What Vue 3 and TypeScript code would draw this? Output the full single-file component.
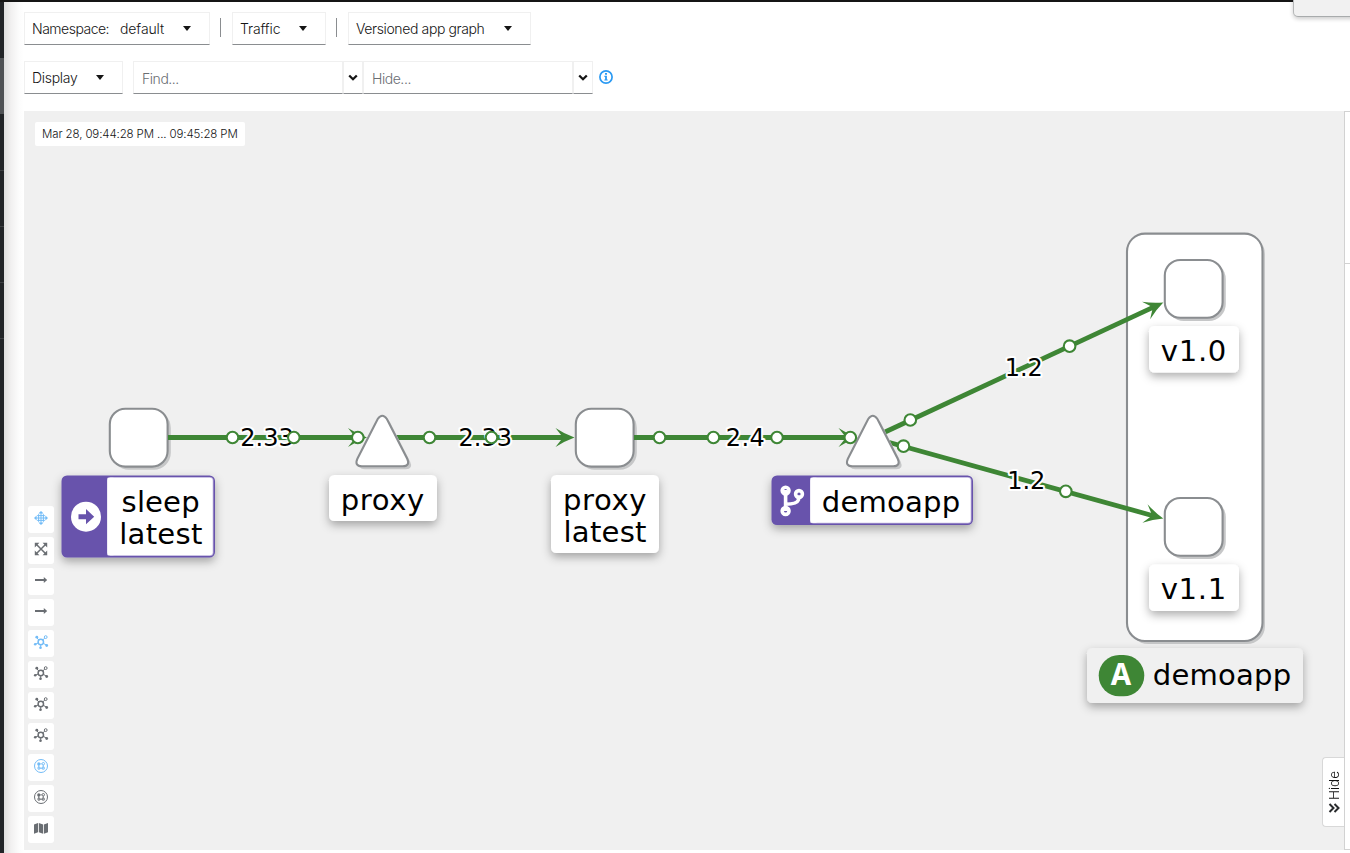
<script setup lang="ts">
interface Point { x: number; y: number }
interface Edge { from: Point; to: Point; arrow: Point; angle: number }
interface Line { text: string; x: number; y: number; w: number }
interface Label { x: number; y: number; w: number; h: number; lines: Line[]; badge?: number }

const GREEN = '#3e8635'

const edges: Edge[] = [
  { from: { x: 168, y: 437.5 }, to: { x: 355, y: 437.5 }, arrow: { x: 367, y: 437.5 }, angle: 0 },
  { from: { x: 396, y: 437.5 }, to: { x: 565, y: 437.5 }, arrow: { x: 574.5, y: 437.5 }, angle: 0 },
  { from: { x: 634, y: 437.5 }, to: { x: 846, y: 437.5 }, arrow: { x: 857.5, y: 437.5 }, angle: 0 },
  { from: { x: 884, y: 432.5 }, to: { x: 1153.5, y: 307.1 }, arrow: { x: 1163.3, y: 302.5 }, angle: -25 },
  { from: { x: 884, y: 441 }, to: { x: 1153, y: 515.7 }, arrow: { x: 1163.3, y: 518.5 }, angle: 15.5 },
]
const rates: Line[] = [
  { text: '2.33', x: 267, y: 446, w: 53.5 },
  { text: '2.33', x: 485.2, y: 446, w: 53.5 },
  { text: '2.4', x: 745.3, y: 446, w: 39 },
  { text: '1.2', x: 1023.7, y: 376, w: 38 },
  { text: '1.2', x: 1026.3, y: 489, w: 38 },
]
const dots: Point[] = [
  { x: 232.5, y: 437.5 }, { x: 293.8, y: 437.5 }, { x: 357.8, y: 437.5 },
  { x: 429.5, y: 437.5 }, { x: 491.5, y: 437.5 }, { x: 659.5, y: 437.5 },
  { x: 713.4, y: 437.5 }, { x: 777, y: 437.5 }, { x: 850.3, y: 437.5 },
  { x: 910.3, y: 420 }, { x: 903.5, y: 446.2 }, { x: 1069.6, y: 346.2 }, { x: 1065.8, y: 491.3 },
]
const squares: Point[] = [
  { x: 109.8, y: 408.8 }, { x: 575.8, y: 408.8 }, { x: 1164.8, y: 260 }, { x: 1164.8, y: 498 },
]
const triangles: Point[] = [{ x: 382.3, y: 415.8 }, { x: 872.8, y: 415.8 }]
const trianglePath = 'M-4.6 3.2Q0-3.2 4.6 3.2L24.8 42.6Q28.2 50.3 20.5 50.5H-20.5Q-28.2 50.3-24.8 42.6Z'

const labels: Label[] = [
  { x: 61.5, y: 475.5, w: 153.5, h: 82, badge: 46, lines: [
    { text: 'sleep', x: 160.6, y: 511.6, w: 78 }, { text: 'latest', x: 160.8, y: 543.6, w: 83 }] },
  { x: 329, y: 475, w: 108, h: 46, lines: [{ text: 'proxy', x: 382.5, y: 509.7, w: 83.5 }] },
  { x: 551, y: 475, w: 108, h: 78, lines: [
    { text: 'proxy', x: 604.7, y: 509.7, w: 83.5 }, { text: 'latest', x: 605, y: 541.7, w: 83 }] },
  { x: 771.5, y: 475.5, w: 201.5, h: 49.5, badge: 39, lines: [{ text: 'demoapp', x: 891, y: 511.6, w: 138.5 }] },
  { x: 1149, y: 326, w: 90, h: 46.5, lines: [{ text: 'v1.0', x: 1193.6, y: 361, w: 65.5 }] },
  { x: 1149, y: 564.5, w: 90, h: 46.5, lines: [{ text: 'v1.1', x: 1193.4, y: 599, w: 65.5 }] },
]

const tools: { icon: string; active?: boolean }[] = [
  { icon: 'drag', active: true }, { icon: 'fit' }, { icon: 'arrow' }, { icon: 'arrow' },
  { icon: 'topology', active: true }, { icon: 'topology' }, { icon: 'topology' }, { icon: 'topology' },
  { icon: 'boxes', active: true }, { icon: 'boxes' }, { icon: 'map' },
]
</script>

<template>
  <div class="page">
    <nav class="rail"><i class="current"></i><i v-for="n in 4" :key="n" class="entry"></i></nav>
    <main>
      <header class="filters">
        <div class="row">
          <button class="select ns"><span class="key">Namespace:</span><span class="value">default</span><i class="caret"></i></button>
          <i class="divider"></i>
          <button class="select traffic"><span>Traffic</span><i class="caret"></i></button>
          <i class="divider second"></i>
          <button class="select kind"><span>Versioned app graph</span><i class="caret"></i></button>
        </div>
        <div class="row">
          <button class="select display"><span>Display</span><i class="caret"></i></button>
          <div class="field">Find...</div>
          <button class="drop"><svg viewBox="0 0 10 7"><path d="M1.2 1.5 5 5.2 8.8 1.5" /></svg></button>
          <div class="field">Hide...</div>
          <button class="drop"><svg viewBox="0 0 10 7"><path d="M1.2 1.5 5 5.2 8.8 1.5" /></svg></button>
          <svg class="info" viewBox="0 0 14 14"><circle cx="7" cy="7" r="6.1" /><path d="M6 3h2v1.8H6zM5.4 5.8h2.5v3.6h.8v1.2H5.3V9.4h.8V7h-.7z" /></svg>
        </div>
      </header>

      <div class="board">
        <section class="canvas">
          <time class="range">Mar 28, 09:44:28 PM ... 09:45:28 PM</time>
          <div class="tools">
            <button v-for="(tool, i) in tools" :key="i" :class="{ active: tool.active }">
              <svg viewBox="0 0 14 14">
                <template v-if="tool.icon === 'drag'">
                  <path d="M7 0 9.6 2.6H4.4ZM7 14 4.4 11.4h5.2ZM0 7l2.6-2.6v5.2ZM14 7l-2.6 2.6V4.4Z" />
                  <path d="M7 2v10M2 7h10M4.6 3.2v7.6M9.4 3.2v7.6M3.2 4.6h7.6M3.2 9.4h7.6" class="line thin" />
                </template>
                <template v-else-if="tool.icon === 'fit'">
                  <path d="M.8.8h4.6L.8 5.4ZM13.2.8v4.6L8.6.8ZM.8 13.2V8.6l4.6 4.6ZM13.2 13.2H8.6l4.6-4.6Z" />
                  <path d="M2.5 2.5l9 9M11.5 2.5l-9 9" class="line" />
                </template>
                <template v-else-if="tool.icon === 'arrow'">
                  <path d="M1 6.1h8.8V4L13.2 7 9.8 10V7.9H1Z" />
                </template>
                <template v-else-if="tool.icon === 'topology'">
                  <circle cx="6.8" cy="7" r="2.7" class="line" />
                  <path d="M4.8 5 2.8 2.7M8.7 5l2.2-2M4.2 8 1.2 9.2M9.3 8.3l3.2 1.9M6.7 9.8v3" class="line thin" />
                  <circle cx="2.8" cy="2.2" r="1.4" /><circle cx="1.2" cy="9.3" r="1.3" /><circle cx="6.5" cy="12.7" r="1.3" /><circle cx="12.7" cy="10.5" r="1.4" />
                  <circle cx="11.7" cy="2.1" r="1.4" class="line thin" />
                </template>
                <template v-else-if="tool.icon === 'boxes'">
                  <circle cx="7" cy="7" r="6.5" class="line thin" />
                  <circle cx="4.8" cy="4.9" r="1.6" /><circle cx="9.3" cy="4.7" r="1.2" class="line thin" />
                  <path d="M4 8.2h1.8v1.9H4zM8.3 8.2h1.9v1.9H8.3zM4.8 6v2M9.2 6v2M6 9.2h2M6.2 4.9h1.6" class="line thin" />
                </template>
                <path v-else d="M0 3.5 4 2v9.2L0 12.8ZM4.8 2l4.3 1.5v9.3L4.8 11.2ZM9.9 3.5 14 2v9.2l-4.1 1.6Z" />
              </svg>
            </button>
          </div>
          <button class="hide-tab"><span>Hide</span><svg viewBox="0 0 12 10"><path d="M1.5 1 5.5 5l-4 4M6.5 1l4 4-4 4" /></svg></button>
        </section>
        <aside class="side"><div></div></aside>
      </div>
    </main>

    <svg class="graph" width="1350" height="853" viewBox="0 0 1350 853">
      <defs>
        <filter id="lift" x="-20%" y="-30%" width="140%" height="180%">
          <feDropShadow dx="0" dy="4" stdDeviation="5" flood-color="#000" flood-opacity=".32" />
        </filter>
      </defs>
      <rect x="1130" y="236" width="135" height="408" rx="18" class="shade" />
      <rect x="1127" y="233.6" width="135.5" height="407.4" rx="18" class="outline" />

      <g v-for="(s, i) in squares" :key="'s' + i">
        <rect :x="s.x + 2" :y="s.y + 2" width="59" height="59" rx="17" class="shade" />
        <rect :x="s.x" :y="s.y" width="57.8" height="57.8" rx="15.5" class="outline" />
      </g>

      <g v-for="(e, i) in edges" :key="'e' + i">
        <line :x1="e.from.x" :y1="e.from.y" :x2="e.to.x" :y2="e.to.y" :stroke="GREEN" stroke-width="4.8" />
        <path d="M0 0Q-10-3.6-19-9.6L-11.5 0-19 9.6Q-10 3.6 0 0Z" :fill="GREEN" :transform="`translate(${e.arrow.x} ${e.arrow.y}) rotate(${e.angle})`" />
      </g>
      <text v-for="(r, i) in rates" :key="'r' + i" :x="r.x" :y="r.y" :textLength="r.w" class="rate">{{ r.text }}</text>
      <g v-for="(t, i) in triangles" :key="'t' + i">
        <path :d="trianglePath" class="shade" :transform="`translate(${t.x + 3} ${t.y + 3})`" />
        <path :d="trianglePath" class="outline" :transform="`translate(${t.x} ${t.y})`" />
      </g>
      <circle v-for="(d, i) in dots" :key="'d' + i" :cx="d.x" :cy="d.y" r="5.8" class="dot" />

      <g v-for="(l, i) in labels" :key="'l' + i">
        <rect :x="l.x" :y="l.y" :width="l.w" :height="l.h" rx="5.5" :fill="l.badge ? '#6753ac' : '#fff'" filter="url(#lift)" />
        <template v-if="l.badge">
          <rect :x="l.x + l.badge - 0.5" :y="l.y + 1.5" :width="l.w - l.badge - 1" :height="l.h - 3" rx="3.5" fill="#b9afdb" />
          <rect :x="l.x + l.badge" :y="l.y + 2.3" :width="l.w - l.badge - 2.3" :height="l.h - 4.6" rx="3" fill="#fff" />
          <rect :x="l.x + l.badge" :y="l.y + 2.3" width="6" :height="l.h - 4.6" fill="#fff" />
        </template>
        <text v-for="(t, j) in l.lines" :key="j" :x="t.x" :y="t.y" :textLength="t.w" class="name">{{ t.text }}</text>
      </g>
      <circle cx="86" cy="516.7" r="15" fill="#fff" />
      <path d="M78.5 514.2h7.5v-5.1l8.2 7.6-8.2 7.6v-5.1h-7.5Z" fill="#6753ac" />
      <g class="branch">
        <path d="M785.6 490v21M785.6 504.3q11.5-.4 12.8-4.3l.5-4.5" />
        <circle cx="785.6" cy="490.6" r="3.4" /><circle cx="785.6" cy="511" r="3.4" /><circle cx="799" cy="494" r="3.4" />
      </g>

      <rect x="1087" y="648" width="216" height="55" rx="5.5" fill="#f0f0f0" filter="url(#lift)" />
      <rect x="1098.7" y="655" width="45.6" height="41.2" rx="20.6" :fill="GREEN" />
      <text x="1121" y="684.5" class="kind-mark">A</text>
      <text x="1222" y="684.6" textLength="138.5" class="name">demoapp</text>
    </svg>
    <div class="topbar"></div>
    <div class="popup"></div>
  </div>
</template>

<style>
body { margin: 0; overflow: hidden; }
</style>

<style scoped>
* { box-sizing: border-box; }
.page { position: relative; display: flex; width: 1350px; height: 853px; overflow: hidden; background: #fff; font: 300 14px/20px Inter, "Open Sans", sans-serif; color: #151515; }
button { margin: 0; padding: 0; border: 0; background: #fff; font: inherit; color: inherit; text-align: left; }
.topbar { position: absolute; inset: 0 0 auto; height: 2px; background: #151515; }
.popup { position: absolute; left: 1293px; top: -8px; width: 70px; height: 25px; border: 1px solid #b5b7b8; border-bottom-color: #a8abac; border-radius: 5px; background: #f1f1f1; box-shadow: 0 2px 4px rgba(0,0,0,.2); }
.rail { display: flex; flex-direction: column; width: 4px; flex: none; padding-top: 58px; background: #212427; }
.rail i { display: block; height: 56px; flex: none; }
.rail .current { height: 57px; border-bottom: 1px solid #212427; background: #4f5255; }
.rail .entry { border-bottom: 1px solid #3c3f42; }
main { display: flex; flex: 1; flex-direction: column; padding: 12px 0 3px 20px; background: linear-gradient(90deg, #dedede 0, #f1f0f0 7px, #fcfcfc 15px, #fff 20px); min-width: 0; }
.filters { display: flex; flex-direction: column; gap: 16px; height: 99px; }
.row { display: flex; height: 33px; align-items: stretch; }
.select { display: flex; align-items: center; justify-content: space-between; padding: 0 18px 0 7px; border: 1px solid #f0f0f0; border-bottom-color: #8a8d90; white-space: nowrap; }
.ns { width: 186px; }
.ns .key { letter-spacing: -.5px; }
.ns .value { margin-left: 11px; margin-right: auto; letter-spacing: -.1px; }
.traffic { width: 94px; letter-spacing: -.1px; }
.kind { width: 183px; letter-spacing: -.38px; }
.display { width: 99px; margin-right: 10px; letter-spacing: -.3px; }
.caret { width: 0; height: 0; border: 4.5px solid transparent; border-top: 5px solid #151515; border-bottom: 0; }
.divider { width: 1px; height: 19px; margin: 6px 11px 0 10px; background: #8a8d90; }
.divider.second { margin-left: 10px; margin-right: 11px; }
.field { width: 210px; padding: 7px 8px 5px; border: 1px solid #f0f0f0; border-bottom-color: #8a8d90; color: #6a6e73; background: #fff; letter-spacing: -.45px; }
.drop { display: flex; align-items: center; justify-content: center; width: 20px; border: 1px solid #f0f0f0; border-bottom-color: #8a8d90; }
.drop svg { width: 10px; height: 7px; fill: none; stroke: #151515; stroke-width: 2.3; }
.info { width: 14px; height: 14px; margin: 9px 0 0 6px; fill: #2b9af3; }
.info circle { fill: none; stroke: #2b9af3; stroke-width: 1.7; }
.board { display: flex; flex: 1; min-height: 0; }
.canvas { position: relative; width: 1320px; background: #f0f0f0; }
.range { position: absolute; left: 11px; top: 11px; width: 210px; height: 24px; padding-left: 7px; border-radius: 2px; background: #fff; font-size: 11.5px; line-height: 24px; white-space: nowrap; letter-spacing: -.12px; }
.tools { position: absolute; z-index: 2; left: 4px; top: 395px; display: flex; flex-direction: column; gap: 4px; }
.tools button { display: flex; justify-content: center; width: 26px; height: 27px; padding-top: 5px; border-radius: 3px; color: #6a6e73; }
.tools .active { color: #73bcf7; }
.tools svg { width: 14px; height: 14px; overflow: visible; fill: currentColor; }
.tools .line { fill: none; stroke: currentColor; stroke-width: 1.5; }
.tools .thin { stroke-width: 1; }
.side { width: 6px; border: 1px solid #d2d2d2; border-right: 0; background: #fff; }
.side div { height: 152px; border-bottom: 1px solid #d2d2d2; }
.hide-tab { position: absolute; right: 0; bottom: 23px; display: flex; flex-direction: column; align-items: center; justify-content: flex-end; gap: 3px; width: 22px; height: 70px; padding-bottom: 13px; border: 1px solid #d8d8d8; border-right: 0; border-radius: 4px 0 0 4px; }
.hide-tab span { writing-mode: vertical-rl; transform: rotate(180deg); font-size: 13.5px; line-height: 18px; }
.hide-tab svg { width: 12px; height: 10px; fill: none; stroke: #292b2d; stroke-width: 2; }
.graph { position: absolute; inset: 0; pointer-events: none; }
.graph text { text-anchor: middle; font-family: "DejaVu Sans", Verdana, sans-serif; font-weight: 400; }
.outline { fill: #fff; stroke: #8a8d90; stroke-width: 2.1; }
.shade { fill: #c6c7c8; }
.dot { fill: #fff; stroke: #3e8635; stroke-width: 2.1; }
.rate { font-size: 24px; fill: #000; stroke: #fff; stroke-width: 4px; stroke-linejoin: round; paint-order: stroke; }
.name { font-size: 29.1px; fill: #000; }
.graph .kind-mark { font-family: "Noto Sans", sans-serif; font-size: 29.5px; font-weight: 700; fill: #fff; }
.branch { fill: none; stroke: #fff; stroke-width: 3.6; }
</style>
